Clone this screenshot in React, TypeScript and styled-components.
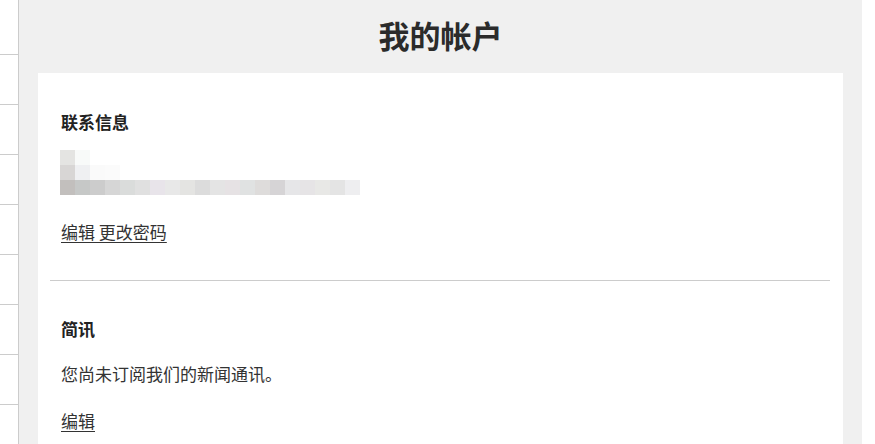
import styled, { createGlobalStyle } from 'styled-components';

const GlobalStyle = createGlobalStyle`
  html, body {
    margin: 0;
    padding: 0;
    background: #ffffff;
    font-family: 'Noto Sans CJK SC', 'Noto Sans', sans-serif;
    color: #333333;
  }
`;

const blurRows: string[][] = [
  ['#e4e4e2', '#f8faf9'],
  ['#d8d6d5', '#eff0f2', '#fafafa', '#fbfbfb'],
  [
    '#c2bfbd', '#c6c8c7', '#cccccc', '#d6d6d6', '#dadcdb',
    '#e0e0e0', '#e8e4ea', '#e8e8e8', '#e4e4e2', '#dcdcdc',
    '#e4e4e4', '#e6e2e4', '#e0e2e2', '#dedcdb', '#d6d4d6',
    '#e6e6e8', '#e6e4e6', '#e8e8e6', '#e4e4e4', '#eeeef0',
  ],
];

export default function App() {
  return (
    <>
      <GlobalStyle />
      <Page>
        <SideBar>
          {Array.from({ length: 9 }).map((_, i) => (
            <SideItem key={i} />
          ))}
        </SideBar>
        <Main>
          <Title>我的帐户</Title>
          <Card>
            <Section $divider>
              <Heading $gap={16}>联系信息</Heading>
              <Blur>
                {blurRows.map((row, r) => (
                  <BlurRow key={r}>
                    {row.map((c, i) => (
                      <Cell key={i} $c={c} />
                    ))}
                  </BlurRow>
                ))}
              </Blur>
              <Links>
                <Link href="#">编辑 更改密码</Link>
              </Links>
            </Section>
            <Section>
              <Heading $gap={21}>简讯</Heading>
              <Text>您尚未订阅我们的新闻通讯。</Text>
              <Links>
                <Link href="#">编辑</Link>
              </Links>
            </Section>
          </Card>
        </Main>
      </Page>
    </>
  );
}

const Page = styled.div`
  display: flex;
  height: 444px;
  overflow: hidden;
`;

const SideBar = styled.div`
  width: 18px;
  flex: none;
  border-right: 1px solid #cccccc;
  background: #ffffff;
  padding-top: 5px;
`;

const SideItem = styled.div`
  height: 49px;
  border-bottom: 1px solid #cccccc;
`;

const Main = styled.div`
  width: 843px;
  flex: none;
  background: #f0f0f0;
  padding: 0 19px;
  box-sizing: border-box;
  display: flex;
  flex-direction: column;
`;

const Title = styled.h1`
  flex: none;
  margin: 0;
  height: 73px;
  line-height: 70px;
  text-align: center;
  font-size: 31px;
  font-weight: 700;
  color: #2b2b2b;
`;

const Card = styled.div`
  flex: 1;
  background: #ffffff;
  padding-top: 1px;
`;

const Section = styled.div<{ $divider?: boolean }>`
  margin: 0 13px 0 12px;
  padding: 36px 11px 36px;
  border-bottom: ${({ $divider }) => ($divider ? '1px solid #cccccc' : 'none')};
`;

const Heading = styled.h2<{ $gap: number }>`
  margin: 0 0 ${({ $gap }) => $gap}px;
  font-size: 17px;
  line-height: 24px;
  font-weight: 700;
  color: #222222;
`;

const Blur = styled.div`
  display: flex;
  flex-direction: column;
  margin: 0 0 25px -1px;
`;

const BlurRow = styled.div`
  display: flex;
  height: 15px;
`;

const Cell = styled.div<{ $c: string }>`
  width: 15px;
  height: 15px;
  background: ${({ $c }) => $c};
`;

const Text = styled.p`
  margin: 0 0 23px;
  font-size: 17px;
  line-height: 24px;
  color: #333333;
`;

const Links = styled.p`
  margin: 0;
  font-size: 17px;
  line-height: 24px;
`;

const Link = styled.a`
  color: #333333;
  text-decoration: underline;
  text-underline-offset: 3px;
`;
